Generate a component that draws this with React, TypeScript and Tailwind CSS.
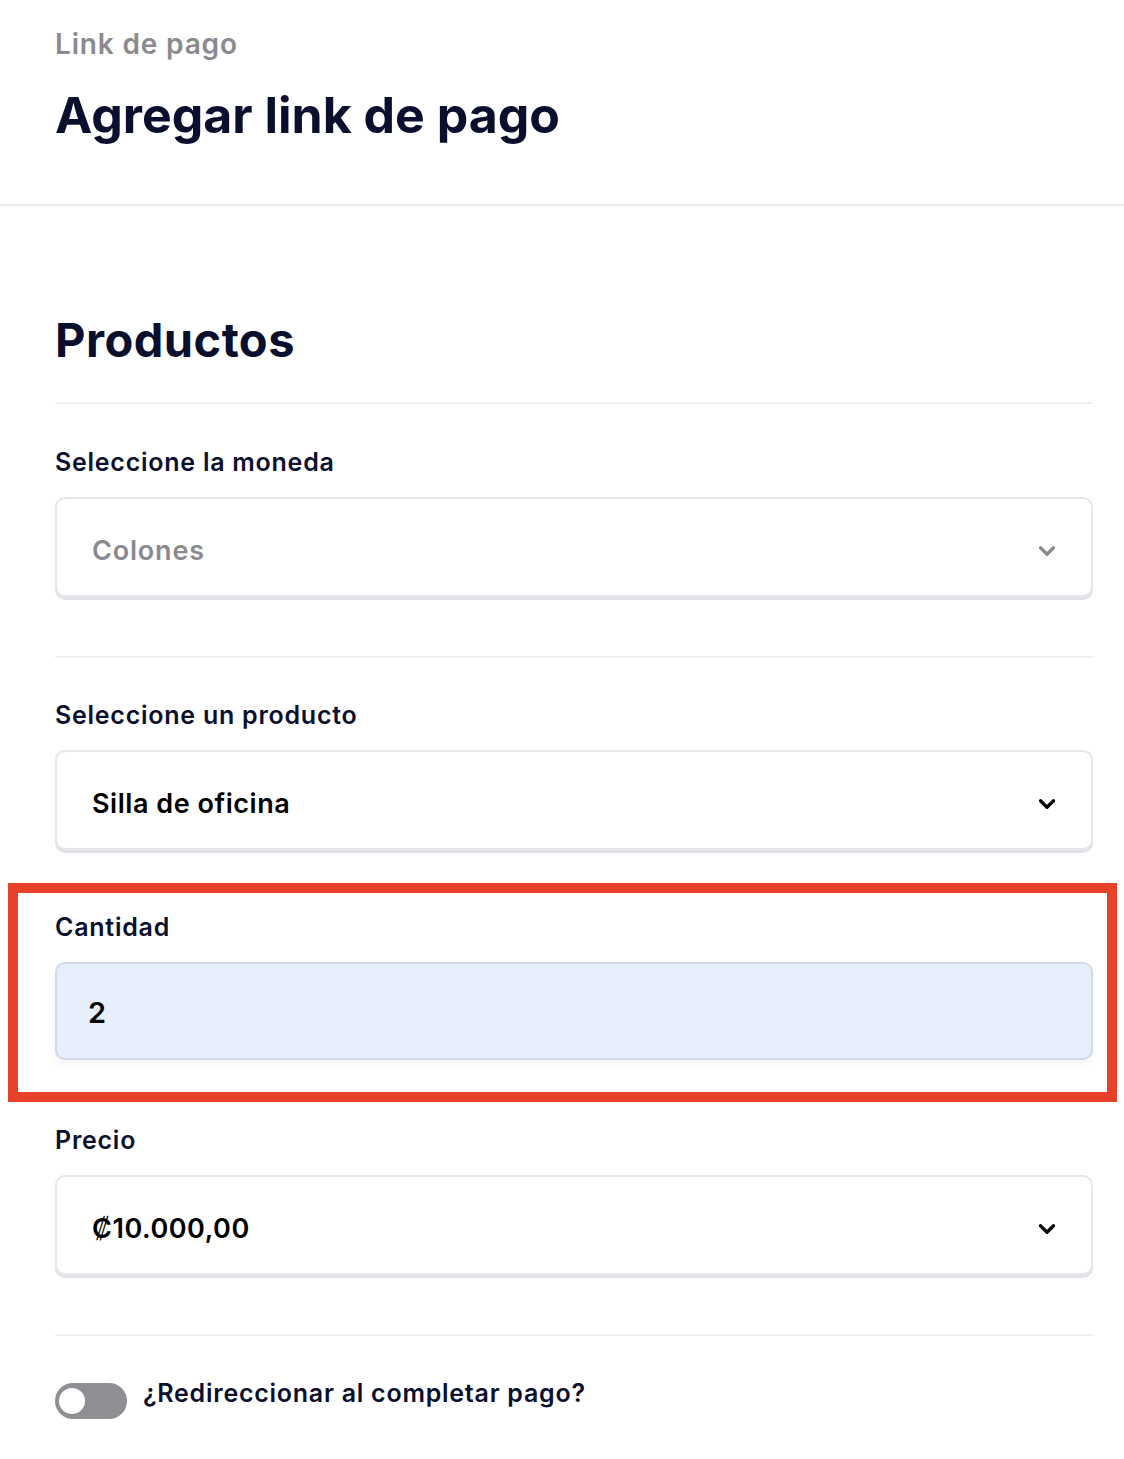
import React from 'react';
import { ChevronDown } from 'lucide-react';

const font = { fontFamily: 'Inter, "Noto Sans", sans-serif' };

function SelectBox({ value, muted }: { value: string; muted?: boolean }) {
  return (
    <div className="h-[100px] rounded-[10px] border-2 border-[#e6e6eb] bg-white shadow-[0_3px_0_#e2e2e7] flex items-center justify-between pl-[35px] pr-[31px] pt-[8px]">
      <span
        className={
          muted
            ? 'text-[27px] font-semibold tracking-[0.03em] text-[#8a8a8f]'
            : 'text-[27px] font-semibold tracking-[0.02em] text-black'
        }
      >
        {value}
      </span>
      <ChevronDown size={26} strokeWidth={3} className={muted ? 'text-[#8a8a8f]' : 'text-black'} />
    </div>
  );
}

function Label({ children }: { children: React.ReactNode }) {
  return <div className="h-[30px] leading-[30px] text-[25px] font-semibold tracking-[0.03em] text-[#0a0f2e]">{children}</div>;
}

export default function App() {
  return (
    <div className="w-[1124px] min-h-[1459px] bg-white" style={font}>
      {/* Header */}
      <div className="px-[55px] pt-[27px] h-[206px] border-b-2 border-[#ededf1]">
        <div className="h-[34px] leading-[34px] text-[28px] font-semibold tracking-[0.03em] text-[#8a8a8f]">Link de pago</div>
        <h1 className="mt-[25px] h-[58px] leading-[58px] text-[50px] font-bold text-[#0a0f2e]">Agregar link de pago</h1>
      </div>

      <div className="pr-[31px] pl-[55px]">
        <h2 className="mt-[106px] h-[56px] leading-[56px] text-[47px] font-bold tracking-[0.01em] text-[#0a0f2e]">Productos</h2>
        <div className="mt-[34px] border-t-2 border-[#f0f0f3]" />

        <div className="mt-[43px]">
          <Label>Seleccione la moneda</Label>
          <div className="mt-[20px]">
            <SelectBox value="Colones" muted />
          </div>
        </div>

        <div className="mt-[59px] border-t-2 border-[#f0f0f3]" />

        <div className="mt-[42px]">
          <Label>Seleccione un producto</Label>
          <div className="mt-[20px]">
            <SelectBox value="Silla de oficina" />
          </div>
        </div>

        {/* Highlighted field */}
        <div className="mt-[33px] -ml-[47px] -mr-[24px] border-[10px] border-[#e8412a] pl-[37px] pr-[14px] pt-[19px] pb-[32px]">
          <Label>Cantidad</Label>
          <div className="mt-[20px] h-[98px] rounded-[10px] border-2 border-[#d2dae7] bg-[#e8effc] shadow-[0_4px_8px_rgba(0,0,0,0.05)] flex items-center pl-[31px] pt-[4px]">
            <span className="text-[29px] font-semibold text-black">2</span>
          </div>
        </div>

        <div className="mt-[23px]">
          <Label>Precio</Label>
          <div className="mt-[20px]">
            <SelectBox value="₡10.000,00" />
          </div>
        </div>

        <div className="mt-[59px] border-t-2 border-[#f0f0f3]" />

        <div className="mt-[47px] flex items-center gap-[16px]">
          <div className="w-[72px] h-[36px] rounded-full bg-[#8e8e93] flex items-center pl-[4px]">
            <div className="w-[26px] h-[26px] rounded-full bg-white" />
          </div>
          <span className="text-[25px] font-semibold tracking-[0.03em] text-[#0a0f2e] -mt-[14px]">¿Redireccionar al completar pago?</span>
        </div>
      </div>
    </div>
  );
}
